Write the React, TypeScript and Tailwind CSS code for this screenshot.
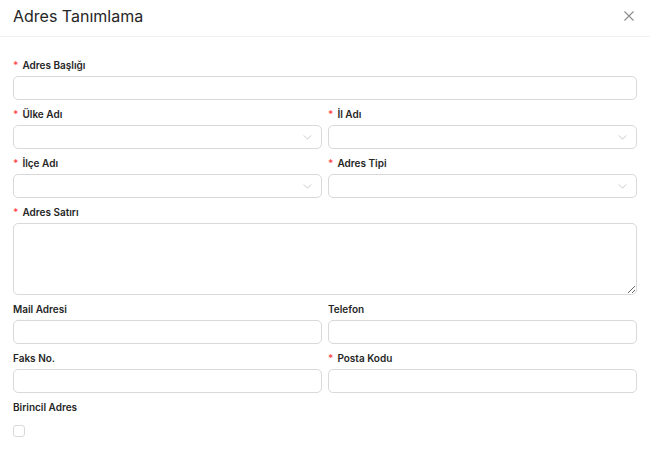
import React from 'react';

const Label = ({ text, required }: { text: string; required?: boolean }) => (
  <div className="h-[14px] flex items-center text-[10px] font-semibold text-[#262626] mb-[4px]">
    {required && <span className="text-[#ff4d4f] mr-[4px] text-[10px] leading-none">*</span>}
    {text}
  </div>
);

const Chevron = () => (
  <svg width="9" height="5" viewBox="0 0 10 6" fill="none" className="text-[#bfbfbf]">
    <path d="M0.5 0.5L5 5L9.5 0.5" stroke="currentColor" strokeWidth="1" />
  </svg>
);

const TextField = ({ label, required }: { label: string; required?: boolean }) => (
  <div>
    <Label text={label} required={required} />
    <input className="block w-full h-[24px] border border-[#d9d9d9] rounded-[5px] px-2 text-[11px] outline-none bg-white" />
  </div>
);

const SelectField = ({ label, required }: { label: string; required?: boolean }) => (
  <div>
    <Label text={label} required={required} />
    <div className="w-full h-[24px] border border-[#d9d9d9] rounded-[5px] px-[9px] flex items-center justify-end bg-white">
      <Chevron />
    </div>
  </div>
);

const App = () => {
  return (
    <div className="w-[650px] h-[468px] bg-white" style={{ fontFamily: "Inter, 'Noto Sans', sans-serif" }}>
      <div className="h-[37px] px-[13px] border-b border-[#f0f0f0] flex items-center justify-between">
        <h1 className="text-[16px] font-normal text-[#262626] -mt-[4px]">Adres Tanımlama</h1>
        <svg width="10" height="10" viewBox="0 0 10 10" className="text-[#8c8c8c] mr-[3px] -mt-[4px]">
          <path d="M0.5 0.5L9.5 9.5M9.5 0.5L0.5 9.5" stroke="currentColor" strokeWidth="1.1" />
        </svg>
      </div>
      <div className="px-[13px] pt-[21px] flex flex-col gap-[7px]">
        <TextField label="Adres Başlığı" required />
        <div className="grid grid-cols-2 gap-[6px]">
          <SelectField label="Ülke Adı" required />
          <SelectField label="İl Adı" required />
        </div>
        <div className="grid grid-cols-2 gap-[6px]">
          <SelectField label="İlçe Adı" required />
          <SelectField label="Adres Tipi" required />
        </div>
        <div>
          <Label text="Adres Satırı" required />
          <textarea className="block w-full h-[72px] border border-[#d9d9d9] rounded-[5px] px-2 text-[11px] outline-none resize-y" />
        </div>
        <div className="grid grid-cols-2 gap-[6px]">
          <TextField label="Mail Adresi" />
          <TextField label="Telefon" />
        </div>
        <div className="grid grid-cols-2 gap-[6px]">
          <TextField label="Faks No." />
          <TextField label="Posta Kodu" required />
        </div>
        <div>
          <Label text="Birincil Adres" />
          <div className="mt-[11px] w-[12px] h-[12px] border border-[#d9d9d9] rounded-[3px] bg-white" />
        </div>
      </div>
    </div>
  );
};

export default App;
